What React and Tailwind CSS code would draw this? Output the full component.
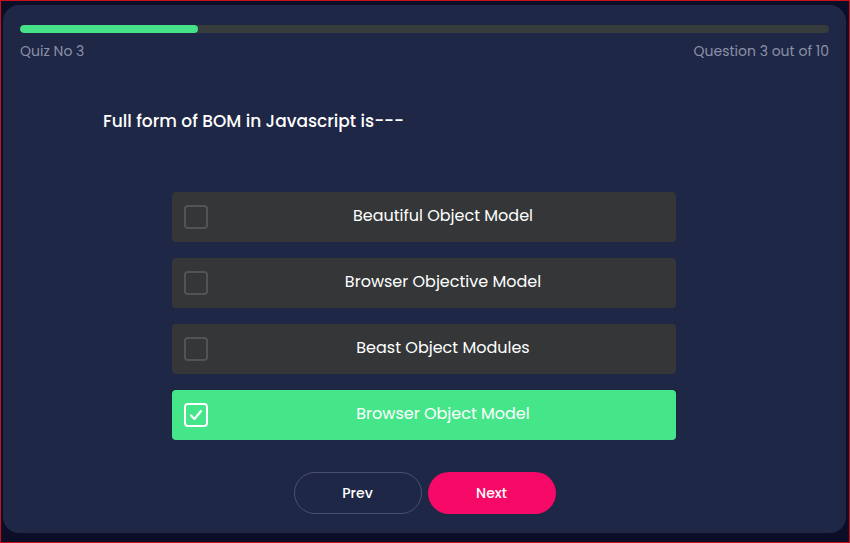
import { useState } from "react";

const options = [
  "Beautiful Object Model",
  "Browser Objective Model",
  "Beast Object Modules",
  "Browser Object Model",
];

export default function App() {
  const [selected, setSelected] = useState(3);

  return (
    <div
      className="w-[850px] h-[543px] bg-[#0b0e26] border border-[#c8101c] box-border"
      style={{ fontFamily: "Poppins, 'Open Sans', sans-serif" }}
    >
      <div className="h-[528px] ml-[2px] mt-[4px] w-[843px] bg-[#1f2746] rounded-[16px] px-[17px] pt-[20px] flex flex-col">
        <div className="h-[8px] w-full rounded-full bg-[#363c3b] overflow-hidden">
          <div className="h-full w-[22%] rounded-full bg-[#45e28a]" />
        </div>
        <div className="flex justify-between mt-[8px] text-[14px] text-[#8a91a6] leading-[20px]">
          <span>Quiz No 3</span>
          <span>Question 3 out of 10</span>
        </div>

        <h2 className="mt-[48px] ml-[83px] text-[17px] font-medium text-white leading-[24px]">
          Full form of BOM in Javascript is---
        </h2>

        <div className="mt-[59px] w-[504px] ml-[152px] flex flex-col gap-[16px]">
          {options.map((opt, i) => {
            const on = selected === i;
            return (
              <button
                key={opt}
                onClick={() => setSelected(i)}
                className={`h-[50px] rounded-[4px] flex items-center pl-[12px] text-[16px] leading-[22px] text-white ${
                  on ? "bg-[#45e589]" : "bg-[#343638]"
                }`}
              >
                <span
                  className={`w-[24px] h-[24px] shrink-0 rounded-[4px] border-2 flex items-center justify-center ${
                    on ? "border-white" : "border-[#515456]"
                  }`}
                >
                  {on && (
                    <svg width="16" height="16" viewBox="0 0 16 16" fill="none">
                      <path d="M3 8.5 L6.5 12 L13 4" stroke="white" strokeWidth="2.2" strokeLinecap="round" strokeLinejoin="round" />
                    </svg>
                  )}
                </span>
                <span className="flex-1 text-center -mt-[2px] pl-[2px]">{opt}</span>
              </button>
            );
          })}
        </div>

        <div className="mt-[32px] flex justify-center gap-[6px]">
          <button className="w-[128px] h-[42px] rounded-full border border-[#4a5170] text-white text-[14px] font-medium">
            Prev
          </button>
          <button className="w-[128px] h-[42px] rounded-full bg-[#f70a67] text-white text-[14px] font-medium">
            Next
          </button>
        </div>
      </div>
    </div>
  );
}
